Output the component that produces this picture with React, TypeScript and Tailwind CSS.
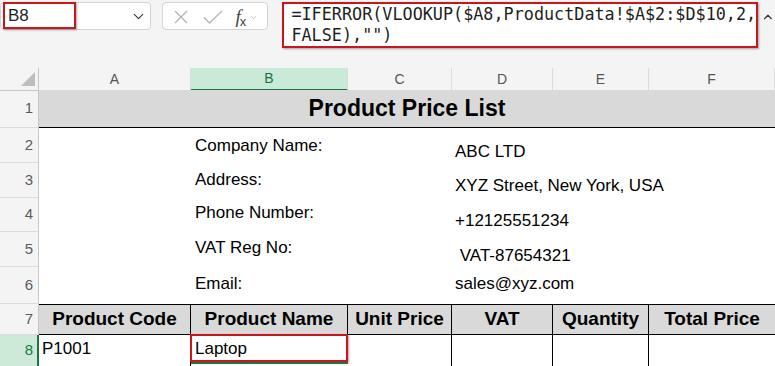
import React from 'react';
import { ChevronDown, ChevronUp } from 'lucide-react';

const COLS = 'grid grid-cols-[39px_152px_157px_104px_101px_96px_126px]';

const RowHead = ({ n, active }: { n: number; active?: boolean }) => (
  <div
    className={
      active
        ? 'flex items-center justify-end pr-[4px] text-[15px] bg-[#cde9d8] text-[#107c41] border-r-2 border-r-[#217346]'
        : 'flex items-center justify-end pr-[5px] text-[15px] bg-[#f4f4f4] text-[#5b5b5b] border-r border-r-[#c6c6c6] border-b border-b-[#dcdcdc]'
    }
  >
    {n}
  </div>
);

const info = [
  { n: 2, h: 'h-[35px]', label: 'Company Name:', value: 'ABC LTD', lp: 'pt-[8px]', vp: 'pt-[14px]' },
  { n: 3, h: 'h-[35px]', label: 'Address:', value: 'XYZ Street, New York, USA', lp: 'pt-[7px]', vp: 'pt-[13px]' },
  { n: 4, h: 'h-[34px]', label: 'Phone Number:', value: '+12125551234', lp: 'pt-[5px]', vp: 'pt-[13px]' },
  { n: 5, h: 'h-[35px]', label: 'VAT Reg No:', value: ' VAT-87654321', lp: 'pt-[6px]', vp: 'pt-[14px]' },
  { n: 6, h: 'h-[37px]', label: 'Email:', value: 'sales@xyz.com', lp: 'pt-[7px]', vp: 'pt-[7px]' },
];

const letters = ['A', 'B', 'C', 'D', 'E', 'F'];
const heads = ['Product Code', 'Product Name', 'Unit Price', 'VAT', 'Quantity', 'Total Price'];

export default function App() {
  return (
    <div className="w-[775px] h-[366px] overflow-hidden bg-[#f4f4f4] font-['Liberation_Sans',Arial,sans-serif] text-black">
      {/* formula bar */}
      <div className="relative h-[68px] flex items-start pt-[2px]">
        <div className="relative w-[153px] h-[28px] bg-white border border-[#d3d3d3] rounded-[4px] flex items-center justify-end pr-[3px]">
          <ChevronDown size={17} strokeWidth={1.6} className="text-[#333]" />
          <div className="absolute left-[2px] -top-[1px] w-[73px] h-[27px] border-2 border-[#c8161d] shadow-[1px_1px_2px_rgba(0,0,0,0.35)] flex items-center pl-[3px] text-[17px] text-[#222]">
            B8
          </div>
        </div>
        <div className="ml-[11px] w-[107px] h-[28px] bg-white border border-[#d3d3d3] rounded-[4px] flex items-center pl-[10px] gap-[14px]">
          <svg width="16" height="16" viewBox="0 0 16 16" className="mt-[1px]">
            <path d="M2 2 L14 14 M14 2 L2 14" stroke="#b4b4b4" strokeWidth="1.3" fill="none" />
          </svg>
          <svg width="20" height="16" viewBox="0 0 20 16" className="mt-[1px]">
            <path d="M1 8.5 L6.5 14 L19 2" stroke="#b4b4b4" strokeWidth="1.3" fill="none" />
          </svg>
          <div className="flex items-center gap-[3px] -ml-[2px]">
            <span className="font-['Liberation_Serif',serif] italic text-[19px] text-[#444] leading-none">
              f<span className="text-[13px] font-['Liberation_Sans',sans-serif] not-italic relative top-[3px] -ml-[1px]">x</span>
            </span>
            <ChevronDown size={9} strokeWidth={1.5} className="text-[#999] mt-[2px]" />
          </div>
        </div>
        <div className="ml-[14px] w-[478px] h-[46px] bg-white border-2 border-[#c8161d] shadow-[1px_1px_2px_rgba(0,0,0,0.35)] pl-[7px] font-['DejaVu_Sans_Mono',monospace] text-[16.8px] leading-[21px] text-[#1f1f1f] whitespace-pre">
          <div>=IFERROR(VLOOKUP($A8,ProductData!$A$2:$D$10,2,</div>
          <div>FALSE),"")</div>
        </div>
        <ChevronUp size={14} strokeWidth={2} className="ml-[3px] mt-[8px] text-[#333]" />
      </div>

      {/* column letters */}
      <div className={`${COLS} h-[22px]`}>
        <div className="relative border-r border-r-[#c6c6c6] border-b border-b-[#c6c6c6]">
          <svg width="14" height="14" viewBox="0 0 14 14" className="absolute left-[21px] top-[4px]">
            <polygon points="0,14 14,14 14,0" fill="#bdbdbd" />
          </svg>
        </div>
        {letters.map((l) =>
          l === 'B' ? (
            <div key={l} className="flex items-center justify-center text-[14px] bg-[#caead8] text-[#1e7145] border-b-2 border-b-[#217346] border-r border-r-[#dcdcdc]">
              {l}
            </div>
          ) : (
            <div key={l} className="flex items-center justify-center text-[14px] text-[#555] border-b border-b-[#c6c6c6] border-r border-r-[#dcdcdc]">
              {l}
            </div>
          )
        )}
      </div>

      {/* row 1 */}
      <div className={`${COLS} h-[38px]`}>
        <RowHead n={1} />
        <div className="col-span-6 bg-[#d9d9d9] border-b border-black flex items-center justify-center font-bold text-[23px]">
          Product Price List
        </div>
      </div>

      {/* info rows */}
      {info.map((r) => (
        <div key={r.n} className={`${COLS} ${r.h}`}>
          <RowHead n={r.n} />
          <div className="bg-white" />
          <div className={`col-span-2 bg-white pl-[4px] text-[17px] leading-[20px] ${r.lp}`}>{r.label}</div>
          <div className={`col-span-3 bg-white pl-[3px] text-[17px] leading-[20px] whitespace-pre ${r.vp}`}>{r.value}</div>
        </div>
      ))}

      {/* row 7 headers */}
      <div className={`${COLS} h-[31px]`}>
        <RowHead n={7} />
        {heads.map((h, i) => (
          <div
            key={h}
            className={
              i < 5
                ? 'bg-[#d9d9d9] border-y border-black border-r flex items-center justify-center font-bold text-[19px] whitespace-nowrap'
                : 'bg-[#d9d9d9] border-y border-black flex items-center justify-center font-bold text-[19px] whitespace-nowrap'
            }
          >
            {h}
          </div>
        ))}
      </div>

      {/* row 8 */}
      <div className={`${COLS} h-[31px]`}>
        <RowHead n={8} active />
        <div className="bg-white border-r border-black pl-[3px] pt-[4px] text-[17px] leading-[20px]">P1001</div>
        <div className="relative bg-white pl-[4px] pt-[4px] text-[17px] leading-[20px]">
          Laptop
          <div className="absolute -left-[1px] -top-[1px] w-[158px] h-[28px] border-2 border-[#c8161d] shadow-[1px_1px_2px_rgba(0,0,0,0.35)]" />
          <div className="absolute left-0 top-[27px] w-[157px] h-[2px] bg-[#217346]" />
        </div>
        <div className="bg-white border-r border-black" />
        <div className="bg-white border-r border-black" />
        <div className="bg-white border-r border-black" />
        <div className="bg-white" />
      </div>
    </div>
  );
}
